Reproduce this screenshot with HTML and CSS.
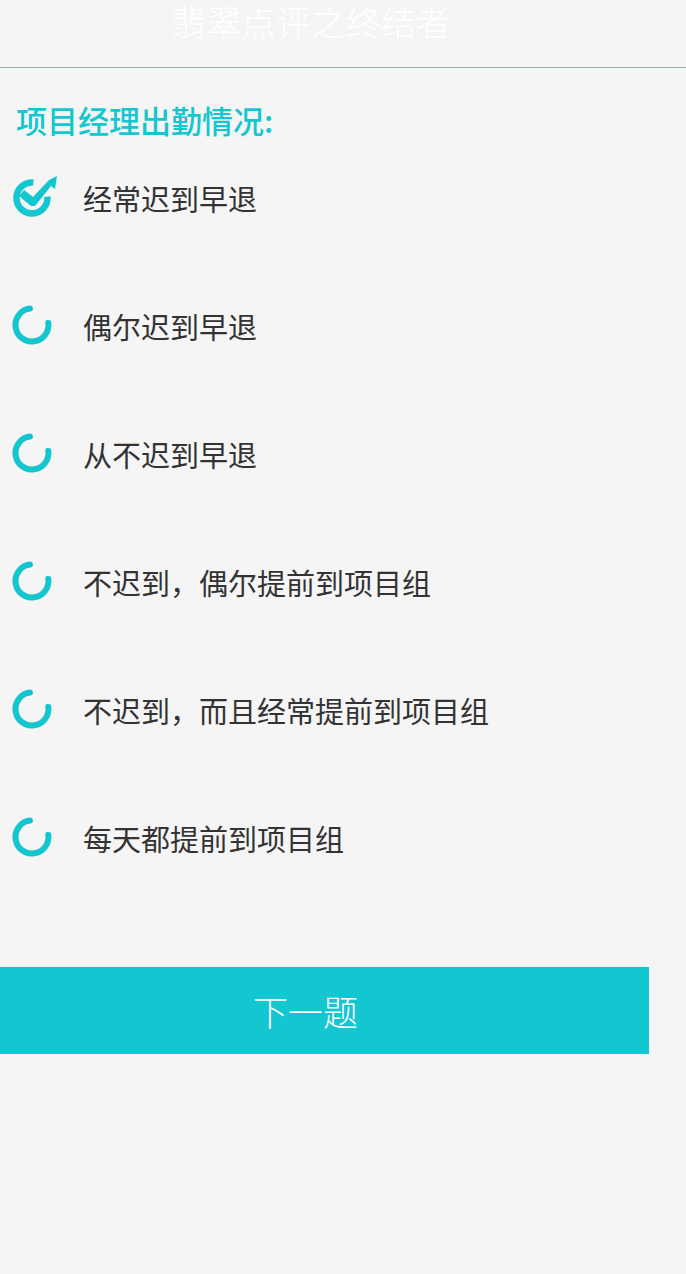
FILE: index.html
```html
<!DOCTYPE html>
<html lang="zh">
<head>
<meta charset="utf-8">
<link rel="stylesheet" href="styles.css">
</head>
<body>
<div class="page">
  <header class="header"><h1 class="title">翡翠点评之终结者</h1></header>
  <div class="question">项目经理出勤情况:</div>
  <ul class="options">
    <li class="option">
      <svg class="icon" viewBox="0 0 56 48" width="56" height="48">
        <path d="M27.3 8.5 A15.5 15.5 0 1 0 41.4 22.6" fill="none" stroke="#14c6d0" stroke-width="6.5"/>
        <path d="M13 22 L18 16 L27 23 L43 6 L51 2 L49 15 L45 12 L29 32 L25 32 Z" fill="#14c6d0"/>
      </svg>
      <span class="label">经常迟到早退</span>
    </li>
    <li class="option">
      <svg class="icon" viewBox="0 0 56 48" width="56" height="48"><path class="ring" d="M24 6.6 A16.5 16.5 0 1 0 42.3 20.7"/></svg>
      <span class="label">偶尔迟到早退</span>
    </li>
    <li class="option">
      <svg class="icon" viewBox="0 0 56 48" width="56" height="48"><path class="ring" d="M24 6.6 A16.5 16.5 0 1 0 42.3 20.7"/></svg>
      <span class="label">从不迟到早退</span>
    </li>
    <li class="option">
      <svg class="icon" viewBox="0 0 56 48" width="56" height="48"><path class="ring" d="M24 6.6 A16.5 16.5 0 1 0 42.3 20.7"/></svg>
      <span class="label">不迟到，偶尔提前到项目组</span>
    </li>
    <li class="option">
      <svg class="icon" viewBox="0 0 56 48" width="56" height="48"><path class="ring" d="M24 6.6 A16.5 16.5 0 1 0 42.3 20.7"/></svg>
      <span class="label">不迟到，而且经常提前到项目组</span>
    </li>
    <li class="option">
      <svg class="icon" viewBox="0 0 56 48" width="56" height="48"><path class="ring" d="M24 6.6 A16.5 16.5 0 1 0 42.3 20.7"/></svg>
      <span class="label">每天都提前到项目组</span>
    </li>
  </ul>
  <button class="next">下一题</button>
</div>
</body>
</html>
```
FILE: styles.css
```css
html, body {
  margin: 0;
  padding: 0;
  background: #f5f5f5;
}
body {
  font-family: "Noto Sans CJK SC", "Noto Sans", sans-serif;
  width: 686px;
  height: 1274px;
  overflow: hidden;
}
.page {
  display: flex;
  flex-direction: column;
}
.header {
  height: 67px;
  border-bottom: 1px solid #8fb4b8;
  display: flex;
  justify-content: center;
  align-items: flex-start;
  padding-right: 64px;
}
.title {
  margin: 0;
  font-size: 35px;
  font-weight: 300;
  line-height: 42px;
  color: #ffffff;
}
.question {
  padding: 40px 0 0 16px;
  margin-bottom: 2px;
  font-size: 31px;
  font-weight: 500;
  line-height: 24px;
  color: #14c6d0;
}
.options {
  list-style: none;
  margin: 0;
  padding: 0;
}
.option {
  height: 128px;
  display: flex;
  align-items: center;
}
.icon {
  margin-left: 6px;
  flex: none;
}
.ring {
  fill: none;
  stroke: #14c6d0;
  stroke-width: 6;
  stroke-linecap: round;
}
.label {
  margin-left: 21px;
  font-size: 29px;
  color: #333333;
}
.next {
  margin-top: 65px;
  width: 649px;
  height: 87px;
  border: none;
  background: #14c6d0;
  color: #ffffff;
  font-family: "Noto Sans CJK SC", "Noto Sans", sans-serif;
  font-size: 35px;
  font-weight: 300;
  padding: 0 38px 0 0;
}
```
